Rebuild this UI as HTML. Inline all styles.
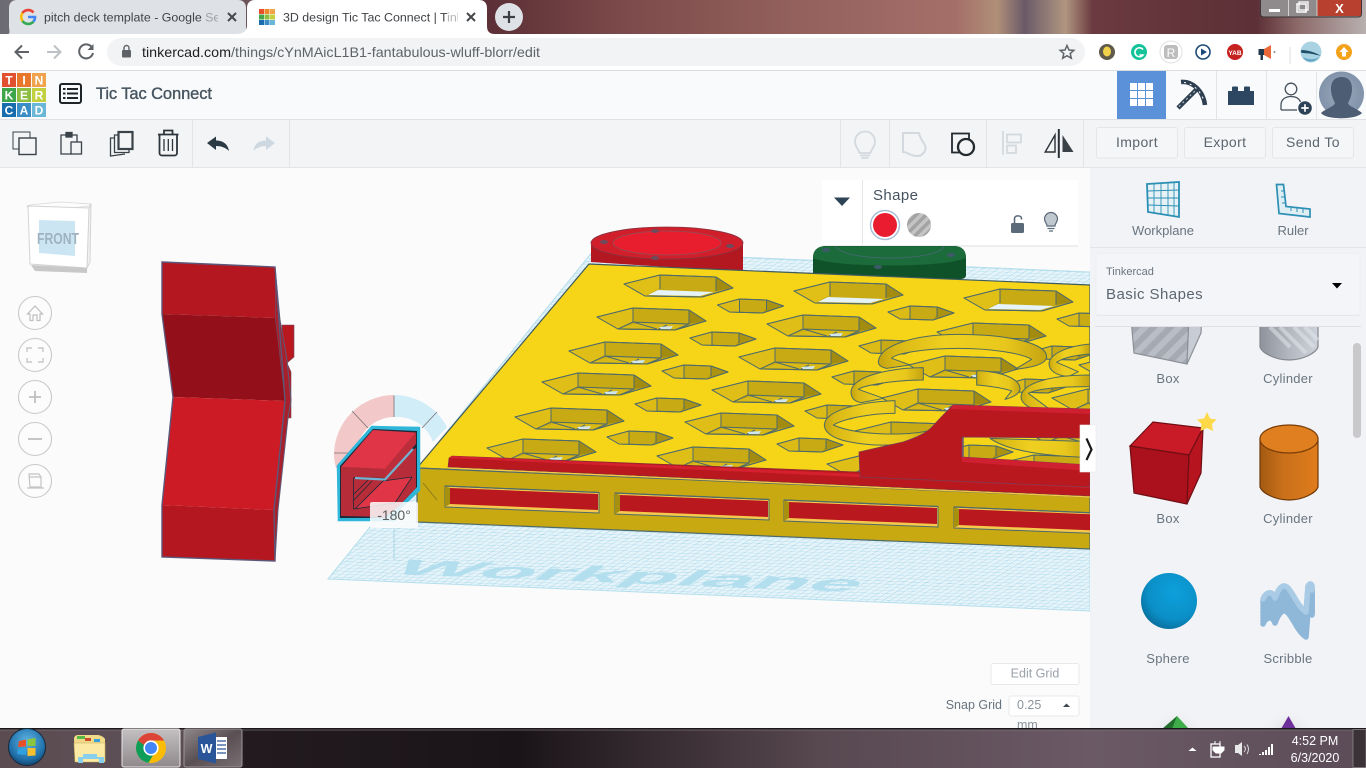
<!DOCTYPE html>
<html><head><meta charset="utf-8"><title>3D design Tic Tac Connect | Tinkercad</title>
<style>
html,body{margin:0;padding:0;width:1366px;height:768px;overflow:hidden;background:#fbfbfb}
svg{display:block;position:absolute;left:0;top:0}
text{font-family:"Liberation Sans",sans-serif}
</style></head><body>
<svg width="1366" height="768" viewBox="0 0 1366 768" xmlns="http://www.w3.org/2000/svg">
<defs>
<linearGradient id="wall" x1="0" x2="1" y1="0" y2="0">
<stop offset="0" stop-color="#6b6a72"/><stop offset=".03" stop-color="#7a7278"/><stop offset=".36" stop-color="#5c3036"/><stop offset=".46" stop-color="#7d4b4b"/><stop offset=".58" stop-color="#93605c"/><stop offset=".70" stop-color="#a56f69"/><stop offset=".73" stop-color="#b08f78"/><stop offset=".75" stop-color="#6a5a68"/><stop offset=".78" stop-color="#b09680"/><stop offset=".80" stop-color="#6a3a40"/><stop offset=".92" stop-color="#5c3036"/><stop offset=".95" stop-color="#8d6a6a"/><stop offset="1" stop-color="#b8b0b0"/>
</linearGradient>
<linearGradient id="task" x1="0" x2="1" y1="0" y2="0">
<stop offset="0" stop-color="#5b4c52"/><stop offset=".13" stop-color="#5d5056"/><stop offset=".18" stop-color="#221a1e"/><stop offset=".38" stop-color="#1a1418"/><stop offset=".6" stop-color="#584850"/><stop offset=".8" stop-color="#6b5a66"/><stop offset="1" stop-color="#5b4c58"/>
</linearGradient>
<linearGradient id="btn" x1="0" x2="0" y1="0" y2="1"><stop offset="0" stop-color="#c4c0c2"/><stop offset="1" stop-color="#8f898c"/></linearGradient>
<linearGradient id="btn2" x1="0" x2="1" y1="0" y2="1"><stop offset="0" stop-color="#8e888b"/><stop offset=".5" stop-color="#5a5054"/><stop offset="1" stop-color="#7a7074"/></linearGradient>
<linearGradient id="cyl" x1="0" x2="1" y1="0" y2="0"><stop offset="0" stop-color="#a35a12"/><stop offset=".4" stop-color="#c9701a"/><stop offset="1" stop-color="#e07c1c"/></linearGradient>
<linearGradient id="cylg" x1="0" x2="1" y1="0" y2="0"><stop offset="0" stop-color="#8e939b"/><stop offset=".5" stop-color="#b3b8c0"/><stop offset="1" stop-color="#cdd1d9"/></linearGradient>
<radialGradient id="sph" cx=".6" cy=".35" r=".8"><stop offset="0" stop-color="#0da0dc"/><stop offset=".6" stop-color="#0b8fc6"/><stop offset="1" stop-color="#075d88"/></radialGradient>
<radialGradient id="ava" cx=".5" cy=".5" r=".5"><stop offset="0" stop-color="#9aa8ba"/><stop offset="1" stop-color="#8193aa"/></radialGradient>
<radialGradient id="orb" cx=".5" cy=".35" r=".7"><stop offset="0" stop-color="#5fb6e6"/><stop offset=".7" stop-color="#1f6fa8"/><stop offset="1" stop-color="#123a60"/></radialGradient>
<radialGradient id="glow" cx=".5" cy=".5" r=".5"><stop offset="0" stop-color="#d8d8da"/><stop offset="1" stop-color="#f2f3f6" stop-opacity="0"/></radialGradient>
<linearGradient id="rg" x1="0" x2="1" y1="0" y2="0"><stop offset="0" stop-color="#c4a311"/><stop offset=".1" stop-color="#d9b816"/><stop offset=".4" stop-color="#efcf1f"/><stop offset=".75" stop-color="#e8c81c"/><stop offset="1" stop-color="#c4a311"/></linearGradient>
<pattern id="grid" width="60" height="60" patternUnits="userSpaceOnUse" patternTransform="matrix(1.2,.05,-.8,.5,0,0)">
<rect width="60" height="60" fill="#e6f4fa"/>
<path d="M6 0V60M12 0V60M18 0V60M24 0V60M30 0V60M36 0V60M42 0V60M48 0V60M54 0V60M0 6H60M0 12H60M0 18H60M0 24H60M0 30H60M0 36H60M0 42H60M0 48H60M0 54H60" stroke="#a6d8ea" stroke-width=".6" fill="none"/>
<path d="M0 0V60M0 0H60" stroke="#7cc2db" stroke-width=".9" fill="none"/>
</pattern>
<pattern id="stripe" width="12" height="12" patternUnits="userSpaceOnUse" patternTransform="rotate(45)">
<rect width="12" height="12" fill="#b9bdc5"/><rect width="6" height="12" fill="#a5a9b2"/>
</pattern>
<pattern id="stripe2" width="7" height="7" patternUnits="userSpaceOnUse" patternTransform="rotate(45)">
<rect width="7" height="7" fill="#c4c4c4"/><rect width="3.5" height="7" fill="#a3a3a3"/>
</pattern>
<clipPath id="canvasClip"><rect x="0" y="168" width="1090" height="560"/></clipPath>
<clipPath id="shelf"><rect x="1090" y="327" width="276" height="401"/></clipPath>
<clipPath id="tabText1"><rect x="40" y="0" width="178" height="34"/></clipPath>
<clipPath id="tabText2"><rect x="280" y="0" width="178" height="34"/></clipPath>
<clipPath id="mmClip"><rect x="1000" y="716" width="60" height="12"/></clipPath>

<g id="hexA" stroke="#4d6a6c" stroke-width="1" stroke-linejoin="round">
<polygon points="0,0 36,-9 92,-7 109,4 78,13 21,12" fill="#c8aa14"/>
<polygon points="0,0 36,-9 36,4 21,12" fill="#e0bf17" stroke="none"/>
<polygon points="92,-7 109,4 92,7" fill="#a38b10" stroke="none"/>
<polygon points="24,11 34,6 90,8 76,12" fill="#e6f3f8" stroke="none"/>
<path d="M36 -9V5M92 -7V7" fill="none"/>
<polygon points="0,0 36,-9 92,-7 109,4 78,13 21,12" fill="none"/>
</g>
<g id="hexB" stroke="#4d6a6c" stroke-width="1" stroke-linejoin="round">
<polygon points="0,0 36,-9 92,-7 109,4 78,13 21,12" fill="#c8aa14"/>
<polygon points="0,0 36,-9 36,4 21,12" fill="#dfbe17" stroke="none"/>
<polygon points="92,-7 109,4 92,7" fill="#a38b10" stroke="none"/>
<polygon points="30,9 42,6 88,8 78,12 24,11" fill="#d9b916" stroke="none"/>
<path d="M36 -9V5L21 12M36 5L92 7V-7M92 7L78 13M36 5L60 12M70 8L62 12" fill="none"/>
<polygon points="62,10 76,9 74,12 64,12" fill="#cfe6ef" stroke="none"/>
<polygon points="0,0 36,-9 92,-7 109,4 78,13 21,12" fill="none"/>
</g>
<g id="hexS" stroke="#4d6a6c" stroke-width="1" stroke-linejoin="round">
<polygon points="0,0 22,-6 49,-5 66,1 45,8 12,7" fill="#c8aa14"/>
<polygon points="0,0 22,-6 22,7 12,7" fill="#dcbb17" stroke="none"/>
<polygon points="49,-5 66,1 45,8 49,3" fill="#ab9211" stroke="none"/>
<path d="M22 -6V7M49 -5V5" fill="none"/>
<polygon points="0,0 22,-6 49,-5 66,1 45,8 12,7" fill="none"/>
</g>
<g id="slot">
<polygon points="445,486 599,492.5 599,513 445,507" fill="#f5c94b" stroke="#4d6a6c" stroke-width="1"/>
<polygon points="450,488 598,494 598,510 450,504" fill="#b9181f"/>
<polygon points="445,486 450,488 450,504 445,507" fill="#a8900f"/>
<path d="M445 486L599 492.5" stroke="#4d6a6c" stroke-width="1.2" fill="none"/>
</g>
<path id="scr" d="M1263 599C1266 592 1272 590 1275 598C1278 590 1282 583 1287 587C1293 592 1297 606 1306 612L1308 586C1310 582 1313 584 1312 590" fill="none" stroke-width="5.500" stroke-linejoin="round" stroke-linecap="round"/>
</defs>

<!-- wallpaper -->
<rect width="1366" height="36" fill="url(#wall)"/>
<!-- window controls -->
<g>
<rect x="1260.5" y="-3" width="101" height="20" rx="3" fill="#8f8a8c" stroke="#3e3436"/>
<rect x="1317" y="-2" width="44" height="18" rx="2" fill="#b8402f"/>
<path d="M1288.5 -2V16M1317 -2V16" stroke="#e6e0e0" stroke-width=".8"/>
<rect x="1269" y="9" width="11" height="3" fill="#fff"/>
<rect x="1297" y="4" width="9" height="8" fill="none" stroke="#fff" stroke-width="1.5"/>
<rect x="1299" y="2" width="9" height="8" fill="none" stroke="#fff" stroke-width="1.3"/>
<text x="1339.5" y="13" font-size="13" font-weight="bold" fill="#fff" text-anchor="middle">X</text>
</g>
<!-- tabs -->
<path d="M7 34C11 34 9 31 9 26V8C9 3 12 0 17 0H238C243 0 246 3 246 8V26C246 31 248 34 250 34Z" fill="#dee1e6"/>
<path d="M236 34C243 34 247 31 247 26V8C247 3 250 0 255 0H479C484 0 487 3 487 8V26C487 31 489 34 495 34Z" fill="#fff"/>
<circle cx="509" cy="17" r="14" fill="#dee1e6"/>
<path d="M509 11V23M503 17H515" stroke="#3c4043" stroke-width="2.2"/>
<!-- G favicon -->
<g fill="none" stroke-width="2.6">
<path d="M33.5 12.5A7 7 0 0 0 22.5 13" stroke="#ea4335"/>
<path d="M22.5 13A7 7 0 0 0 22.5 21" stroke="#fbbc05"/>
<path d="M22.5 21A7 7 0 0 0 33.5 21.5" stroke="#34a853"/>
<path d="M33.5 21.5A7 7 0 0 0 35 17H28" stroke="#4285f4"/>
</g>
<text x="44" y="21.5" font-size="12.400" fill="#3f4246" clip-path="url(#tabText1)">pitch deck template - Google Search</text>
<rect x="206" y="2" width="14" height="30" fill="#dee1e6" opacity=".6"/>
<path d="M228 13L236 21M236 13L228 21" stroke="#45484c" stroke-width="2"/>
<!-- active favicon -->
<g>
<rect x="259" y="9" width="5" height="5" fill="#e8502a"/><rect x="264.5" y="9" width="5" height="5" fill="#ea8a2d"/><rect x="270" y="9" width="5" height="5" fill="#f3a648"/>
<rect x="259" y="14.5" width="5" height="5" fill="#43a64a"/><rect x="264.5" y="14.5" width="5" height="5" fill="#8cbf3f"/><rect x="270" y="14.5" width="5" height="5" fill="#c4d03f"/>
<rect x="259" y="20" width="5" height="5" fill="#1a6eb0"/><rect x="264.5" y="20" width="5" height="5" fill="#3a8dc5"/><rect x="270" y="20" width="5" height="5" fill="#6ab8d8"/>
</g>
<text x="283" y="21.5" font-size="12.400" fill="#3f4246" clip-path="url(#tabText2)">3D design Tic Tac Connect | Tinkercad</text>
<rect x="448" y="2" width="12" height="30" fill="#fff" opacity=".6"/>
<path d="M467 13L475 21M475 13L467 21" stroke="#45484c" stroke-width="2"/>

<!-- browser toolbar -->
<rect y="34" width="1366" height="36" fill="#fff"/>
<rect y="70" width="1366" height="1" fill="#dadce0"/>
<path d="M29 52H16M22 45.5L15.5 52L22 58.5" fill="none" stroke="#5f6368" stroke-width="2"/>
<path d="M47 52H60M54 45.5L60.5 52L54 58.5" fill="none" stroke="#bdc1c6" stroke-width="2"/>
<path d="M92 47.5A7 7 0 1 0 93 53" fill="none" stroke="#5f6368" stroke-width="2"/><path d="M93.5 44V50H87.5Z" fill="#5f6368"/>
<rect x="107" y="38" width="978" height="28" rx="14" fill="#f1f3f4"/>
<rect x="122" y="50" width="9" height="7.5" rx="1" fill="#5f6368"/><path d="M124 50V48A2.5 2.5 0 0 1 129 48V50" fill="none" stroke="#5f6368" stroke-width="1.4"/>
<text x="142" y="57" font-size="14" fill="#202124" textLength="398" lengthAdjust="spacingAndGlyphs"><tspan>tinkercad.com</tspan><tspan fill="#5f6368">/things/cYnMAicL1B1-fantabulous-wluff-blorr/edit</tspan></text>
<path d="M1067 45.5L1069 50L1073.8 50.4L1070.2 53.5L1071.3 58.2L1067 55.7L1062.7 58.2L1063.8 53.5L1060.2 50.4L1065 50Z" fill="none" stroke="#5f6368" stroke-width="1.5"/>
<!-- extensions -->
<circle cx="1107" cy="52" r="8" fill="#5f5a4a"/><ellipse cx="1107" cy="51.5" rx="4" ry="5" fill="#f2d24a"/>
<circle cx="1139" cy="52" r="8" fill="#15c39a"/><path d="M1143 49.5A4.5 4.5 0 1 0 1143 55H1139.5" fill="none" stroke="#fff" stroke-width="1.6"/>
<circle cx="1171" cy="52" r="11" fill="#fff" stroke="#dfe1e4"/><rect x="1164" y="45" width="14" height="14" rx="3" fill="#bdbdbd"/><text x="1171" y="57" font-size="12" fill="#fff" text-anchor="middle" font-family="Liberation Serif">R</text>
<circle cx="1203" cy="52" r="7" fill="#fff" stroke="#1c4a78" stroke-width="1.6"/><path d="M1201 48.5L1207 52L1201 55.5Z" fill="#1c4a78"/>
<circle cx="1235" cy="52" r="8" fill="#c5211f"/><text x="1235" y="55" font-size="6.5" font-weight="bold" fill="#fff" text-anchor="middle">YAB</text>
<path d="M1260 49H1264L1271 45V59L1264 55H1260Z" fill="#e8683a"/><path d="M1258.5 49H1264V55H1263V60H1260.5V55H1258.5Z" fill="#22384e"/><circle cx="1274.5" cy="52" r="1" fill="#888"/>
<rect x="1289.5" y="47" width="1" height="17" fill="#dadce0"/>
<circle cx="1311" cy="52" r="10.5" fill="#a9d2e2"/><path d="M1301 50C1307 50 1315 52 1321 56C1314 54 1307 53 1301.5 53Z" fill="#1f4f68"/><path d="M1303 57C1308 60 1315 60 1319 57C1315 63 1306 63 1303 57Z" fill="#5fa5c2"/>
<circle cx="1344" cy="52" r="8" fill="#f3a21c"/><path d="M1344 47L1339.5 52H1342V56.5H1346V52H1348.5Z" fill="#fff"/>

<!-- tinkercad header -->
<rect y="71" width="1366" height="48" fill="#f9fafb"/>
<rect y="119" width="1366" height="1.5" fill="#dfe1e4"/>
<g font-size="12" font-weight="bold" fill="#fff" text-anchor="middle">
<rect x="2" y="73" width="14" height="14" fill="#e2512f"/><text x="9" y="84.5">T</text>
<rect x="17" y="73" width="14" height="14" fill="#e9772b"/><text x="24" y="84.5">I</text>
<rect x="32" y="73" width="14" height="14" fill="#f0a24c"/><text x="39" y="84.5">N</text>
<rect x="2" y="88" width="14" height="14" fill="#3fa54b"/><text x="9" y="99.5">K</text>
<rect x="17" y="88" width="14" height="14" fill="#8cbf3f"/><text x="24" y="99.5">E</text>
<rect x="32" y="88" width="14" height="14" fill="#c2cf3e"/><text x="39" y="99.5">R</text>
<rect x="2" y="103" width="14" height="14" fill="#176cae"/><text x="9" y="114.5">C</text>
<rect x="17" y="103" width="14" height="14" fill="#3a8dc5"/><text x="24" y="114.5">A</text>
<rect x="32" y="103" width="14" height="14" fill="#6ab7d7"/><text x="39" y="114.5">D</text>
</g>
<rect x="60" y="84" width="21" height="19" rx="2" fill="none" stroke="#1f2428" stroke-width="2"/>
<path d="M63 89H65.5M67 89H78M63 93.5H65.5M67 93.5H78M63 98H65.5M67 98H78" stroke="#1f2428" stroke-width="2"/>
<text x="96" y="99" font-size="16.500" fill="#46545f" stroke="#46545f" stroke-width=".35" textLength="116" lengthAdjust="spacing">Tic Tac Connect</text>
<!-- header right -->
<rect x="1117" y="71" width="49" height="48" fill="#5a91d8"/>
<g fill="#fff"><rect x="1130" y="83" width="7" height="7"/><rect x="1138" y="83" width="7" height="7"/><rect x="1146" y="83" width="7" height="7"/><rect x="1130" y="91" width="7" height="7"/><rect x="1138" y="91" width="7" height="7"/><rect x="1146" y="91" width="7" height="7"/><rect x="1130" y="99" width="7" height="7"/><rect x="1138" y="99" width="7" height="7"/><rect x="1146" y="99" width="7" height="7"/></g>
<path d="M1216.5 71V119M1266.5 71V119M1316.5 72V119" stroke="#e2e4e7"/>
<path d="M1178 108L1197 89" stroke="#2d3f50" stroke-width="4.500"/><path d="M1179 106.500L1195 91" stroke="#c9d0d6" stroke-width="1" stroke-dasharray="2 3"/>
<path d="M1181 82C1192 81 1203 90 1205 105" fill="none" stroke="#2d3f50" stroke-width="4.500"/><path d="M1184 82.500C1192 83 1201 91 1204 101" fill="none" stroke="#fff" stroke-width="1" stroke-dasharray="2 4"/>
<path d="M1228 91H1232V87.500A1 1 0 0 1 1233 86.500H1237A1 1 0 0 1 1238 87.500V91H1244V87.500A1 1 0 0 1 1245 86.500H1249A1 1 0 0 1 1250 87.500V91H1254V105H1228Z" fill="#2d4661"/>
<circle cx="1291" cy="89" r="5.800" fill="none" stroke="#46525d" stroke-width="1.300"/>
<path d="M1281 110V105C1281 99 1286 96.500 1291 96.500C1295 96.500 1299 98 1300.500 102" fill="none" stroke="#46525d" stroke-width="1.300"/><path d="M1281 110H1297" stroke="#46525d" stroke-width="1.300"/>
<circle cx="1305" cy="108" r="6.800" fill="#2d4256"/><path d="M1305 104.300V111.700M1301.300 108H1308.700" stroke="#fff" stroke-width="1.700"/>
<circle cx="1341.500" cy="94" r="22.500" fill="url(#ava)"/>
<path d="M1331 89C1331 80 1336 77 1342 77C1348 77 1352 81 1352 89C1352 96 1349 101 1348 103C1349 107 1358 109 1362 113C1356 120 1326 120 1321 113C1325 109 1334 107 1335 103C1333 99 1331 95 1331 89Z" fill="#4d5d73"/>

<!-- toolbar -->
<rect y="120" width="1366" height="47" fill="#f3f4f6"/>
<rect y="167" width="1366" height="1" fill="#e3e4e7"/>
<path d="M192.500 120V167M289.500 120V167M840.500 120V167M889.500 120V167M986.500 120V167M1083.500 120V167" stroke="#e2e4e7"/>
<g fill="none" stroke="#3a4249">
<rect x="13" y="132" width="17" height="17" stroke-width="1"/><rect x="19" y="138" width="17" height="16.500" fill="#f3f4f6" stroke-width="1.400"/>
<path d="M66 135H61V154H72M72 135H77V142" stroke-width="1.300"/><rect x="66" y="132.500" width="6" height="4.500" stroke-width="1.300" fill="#3a4249"/><rect x="71" y="142" width="10.500" height="12" stroke-width="1.300"/>
<rect x="118.500" y="132" width="14" height="17" stroke-width="2.200"/><path d="M118 135H114.500V152.500H129V149M114.500 138H110.500V156L125 154" stroke-width="1.300"/>
</g>
<g fill="none" stroke="#2d363d" stroke-width="1.800">
<path d="M158 134.500H178.500M164 134V130.500H172.500V134"/><path d="M159.500 135V153A2.500 2.500 0 0 0 162 155.500H174.500A2.500 2.500 0 0 0 177 153V135"/><path d="M164 139V151M168.300 139V151M172.500 139V151" stroke-width="1.300"/>
</g>
<path d="M207 143L216 136.500V140.500C224 140.500 228 145 229 151C225.500 147.500 221 146 216 146V150Z" fill="#2c3a44"/>
<path d="M275 143L266 136.500V140.500C258 140.500 254 145 253.500 151C257 147.500 261 146 266 146V150Z" fill="#cdd8e0"/>
<g fill="none" stroke="#d3d9de" stroke-width="1.800">
<path d="M859.500 153C859 149 855 147.500 855 141.500A10 10 0 0 1 875 141.500C875 147.500 871 149 870.500 153Z"/><path d="M860 155.500H870M861.500 158H868.500"/>
<path d="M903 133H919C920 139 924 142 925.500 147C926 152 922 156 917 156C910 156 908 152 903 152Z" stroke-width="2"/>
</g>
<rect x="952" y="133.500" width="17" height="19" fill="none" stroke="#242b30" stroke-width="1.800"/>
<circle cx="966" cy="147" r="8" fill="#f3f4f6" stroke="#242b30" stroke-width="2.300"/>
<path d="M1003 131V155" stroke="#d3d9de" stroke-width="1.800"/>
<rect x="1007" y="134.500" width="14" height="8" fill="none" stroke="#d3d9de" stroke-width="1.800"/>
<rect x="1007" y="145.500" width="9" height="7.500" fill="none" stroke="#d3d9de" stroke-width="1.800"/>
<path d="M1058.800 129V158" stroke="#2a3036" stroke-width="2"/>
<path d="M1055 135V152H1045.200Z" fill="none" stroke="#2a3036" stroke-width="1.400"/>
<path d="M1062.500 135V152H1073.500Z" fill="#3a4147"/>
<g fill="#f5f6f7" stroke="#e4e6e9"><rect x="1096.500" y="127.500" width="81" height="30.500" rx="2"/><rect x="1184.500" y="127.500" width="81" height="30.500" rx="2"/><rect x="1272.500" y="127.500" width="81" height="30.500" rx="2"/></g>
<g font-size="14" fill="#5b6670" text-anchor="middle" letter-spacing=".4"><text x="1137" y="147">Import</text><text x="1225" y="147">Export</text><text x="1313" y="147">Send To</text></g>

<!-- canvas -->
<rect x="0" y="168" width="1090" height="560" fill="#fbfbfb"/>
<g clip-path="url(#canvasClip)">
<!-- workplane -->
<polygon points="328,579 593,251 1090,272 1090,611" fill="url(#grid)" stroke="#b5deec"/>
<text transform="translate(388,574) matrix(1,.038,-.6,.42,0,0)" font-size="50" font-weight="bold" fill="#b3deee" textLength="465" lengthAdjust="spacingAndGlyphs">Workplane</text>
<!-- discs -->
<path d="M591 243V262L743 272V243Z" fill="#b31820"/>
<ellipse cx="667" cy="246" rx="76" ry="19" fill="#b31820"/>
<ellipse cx="667" cy="243" rx="76" ry="16" fill="#d01f2b" stroke="#8a3340" stroke-width=".8"/>
<ellipse cx="667" cy="243" rx="54" ry="12" fill="#e81e2e" stroke="#a0454f"/>
<ellipse cx="655" cy="231" rx="4" ry="2" fill="#6e4a5c"/><ellipse cx="604" cy="242" rx="4" ry="2" fill="#6e4a5c"/><ellipse cx="730" cy="246" rx="4" ry="2" fill="#6e4a5c"/><ellipse cx="655" cy="258" rx="4" ry="2" fill="#6e4a5c"/>
<path d="M813 258Q813 247 825 246H955Q966 247 966 258V275Q966 279 960 279H813Z" fill="#0f5229"/>
<path d="M813 258Q813 247 825 246H955Q966 247 966 258C945 268 835 268 813 258Z" fill="#1c6b3a"/>
<path d="M836 246C840 262 940 262 944 246" fill="none" stroke="#3e6a6a"/>
<ellipse cx="826" cy="250" rx="4" ry="2" fill="#3e5a6a"/><ellipse cx="951" cy="255" rx="4" ry="2" fill="#3e5a6a"/><ellipse cx="878" cy="267" rx="4" ry="2" fill="#3e5a6a"/>
<!-- plate -->
<polygon points="589,264 1090,285 1090,497 417,468" fill="#f6d417" stroke="#3e5a60" stroke-width="1.200"/>
<!-- hexes -->
<use href="#hexA" x="624" y="284"/><use href="#hexB" x="597" y="317"/><use href="#hexB" x="569" y="351"/><use href="#hexB" x="542" y="382"/><use href="#hexB" x="515" y="417"/><use href="#hexB" x="487" y="448"/>
<use href="#hexA" x="794" y="291"/><use href="#hexB" x="767" y="324"/><use href="#hexB" x="739" y="357"/><use href="#hexB" x="712" y="390"/><use href="#hexB" x="685" y="422"/><use href="#hexB" x="657" y="456"/>
<use href="#hexA" x="964" y="298"/><use href="#hexB" x="937" y="332"/><use href="#hexB" x="909" y="365"/><use href="#hexB" x="882" y="398"/><use href="#hexB" x="855" y="431"/><use href="#hexB" x="827" y="464"/>
<use href="#hexB" x="1079" y="365"/><use href="#hexB" x="1052" y="398"/><use href="#hexB" x="1025" y="431"/><use href="#hexB" x="998" y="464"/>
<use href="#hexS" x="717.500" y="305"/><use href="#hexS" x="690" y="338"/><use href="#hexS" x="662" y="371"/><use href="#hexS" x="635" y="404"/><use href="#hexS" x="607" y="437"/>
<use href="#hexS" x="888" y="312"/><use href="#hexS" x="859" y="346"/><use href="#hexS" x="832" y="377"/><use href="#hexS" x="805" y="411"/><use href="#hexS" x="777" y="444"/>
<use href="#hexS" x="1057" y="319"/><use href="#hexS" x="1030" y="352"/><use href="#hexS" x="1003" y="385"/><use href="#hexS" x="975" y="418"/><use href="#hexS" x="947" y="451"/>
<!-- rings -->
<g transform="translate(815,330) scale(.33333)" fill="url(#rg)" stroke="#4f6a60" stroke-width="3" stroke-linejoin="round">
<path d="M525 325L825 335V383C700 378 580 365 525 325Z"/>
<path d="M825 42C760 48 705 70 702 100C702 120 720 135 760 140L790 125L725 97C750 80 790 75 825 72Z"/>
<path d="M825 135C720 135 622 155 618 200C618 215 630 225 650 235H700L640 190C670 175 750 170 825 170Z"/>
<path d="M190 95C195 45 300 13 430 13C580 13 695 40 695 80C695 100 660 112 600 118L650 88C620 70 530 55 430 55C330 55 240 70 230 85L285 105L215 115C198 112 190 105 190 95Z"/>
<path d="M485 122C560 125 612 145 615 175C615 190 600 200 570 208L590 183C560 172 520 168 485 165Z"/>
<path d="M325 113C240 113 112 135 108 185C108 205 120 215 138 218L205 205L130 178C150 165 240 150 325 150Z"/>
<path d="M240 212C140 215 30 240 28 285C28 305 50 325 100 335C170 350 260 350 340 325L350 300C280 318 130 318 55 285C90 265 170 250 240 250Z"/>
</g>
<!-- front face -->
<polygon points="417,468 1090,497 1090,549 417,522" fill="#c9a911" stroke="#4d6a6c" stroke-width="1.200"/>
<use href="#slot"/><use href="#slot" x="170" y="7"/><use href="#slot" x="339" y="14"/><use href="#slot" x="509" y="21"/>
<path d="M423 483L437 500" stroke="#7d7020" stroke-width=".7"/>
<!-- rail -->
<polygon points="448,467 449,458 452,456 860,472 1090,485 1090,496" fill="#b9181f" stroke="#7a3040" stroke-width=".6"/>
<polygon points="449,458 452,456 1090,484 1090,488" fill="#d4202f"/>
<path d="M448 468L1090 497" stroke="#f5c84a" stroke-width="1.200"/>
<!-- big red shape -->
<path d="M859 452L903 442C915 438 925 434 932 427C940 418 947 411 953 405L1090 409V438L962 437V457L1090 465V487L860 477Z" fill="#b9181f" stroke="#7c3a50" stroke-width=".8"/>
<polygon points="953,405 1090,409 1090,414 951,409" fill="#cf2031"/>
<polygon points="962,457 1090,465 1090,471 962,462" fill="#cf2031"/>
<path d="M963 437.500V457" stroke="#6c5a78" stroke-width="1.500"/>
<!-- rotator -->
<path d="M394 395A60 60 0 0 0 334 455C334 460 335 464 336 468L358 466A38 38 0 0 1 394 417Z" fill="#f2c9c8"/>
<path d="M394 395A60 60 0 0 1 447 427L433 442A38 38 0 0 0 394 417Z" fill="#d1edf8"/>
<path d="M394 395.500V417M352 411L368 428M334 453H358M437 412L422 428" stroke="#7c7074" stroke-width=".8"/>
<!-- small box -->
<polygon points="338,466 372,427 419,428 419,490 400,508 395,520 339,520" fill="#2fb6d8" stroke="#2fb6d8" stroke-width="2.500"/>
<polygon points="340,466 373,429 417,431 417,487 400,505 385,518 340,518" fill="#1b2a3a"/>
<polygon points="341,467 385,469 385,478 354,477 354,509 395,503 398,507 385,517 341,516" fill="#b62c38"/>
<polygon points="341,467 373,430 416,432.500 385,469" fill="#e03547"/>
<polygon points="385,469 416,432.500 416,444 385,479" fill="#bd2e3a"/>
<polygon points="354,478 385,480 412,450 416,448 416,488 398,507 395,502 354,509" fill="#b62c38"/>
<polygon points="355,509 383,481 412,477 395,502" fill="#e03547"/>
<path d="M353.500 477.500V509L395 503L412 477M355 509L383 481M354 494L368 480M383 481L412 477M354 500L372 481" stroke="#1e2a38" stroke-width=".8" fill="none"/>
<path d="M355 478L385 479.500L413 449" stroke="#6fb4d3" stroke-width="2.200" fill="none"/>
<rect x="370" y="502" width="48" height="26" rx="2" fill="#fbfbfb" fill-opacity=".86"/>
<path d="M394 528V560" stroke="#9fcfe0" stroke-width=".8"/>
<text x="394" y="520" font-size="14" fill="#5a5a5a" text-anchor="middle">-180°</text>
<!-- big red object -->
<path d="M282 325H294V357L287 363L291 372V418H285Z" fill="#b9181f" stroke="#6e4a60" stroke-width=".6"/>
<polygon points="275,267 280,320 287,360 291,400 288,418 278,510 275,561 274,510 285,401 275,318" fill="#a8202c" stroke="#5d5a78" stroke-width="1"/>
<polygon points="162,262 275,267 275,318 162,314" fill="#b4171f"/>
<polygon points="162,314 275,318 285,401 173,397" fill="#93101a"/>
<polygon points="173,397 285,401 274,510 162,505" fill="#cd1b26"/>
<polygon points="162,505 274,510 275,561 162,557" fill="#b4171f"/>
<path d="M162 262L275 267L285 401L274 510L275 561L162 557V505L173 397L162 314Z" fill="none" stroke="#5c5678" stroke-width="1.400"/>
<!-- view cube -->
<polygon points="30,213 33,263 87,268 89,216" fill="#fff" stroke="#d4d4d4"/>
<polygon points="30,205 27,206 30,213 89,206 91,204 60,202" fill="#fcfcfc" stroke="#d9d9d9" stroke-width=".8"/>
<polygon points="89,208 91,204 90,262 87,268" fill="#f2f2f2" stroke="#d4d4d4"/>
<polygon points="28,206 89,208 87,268 30,264" fill="#fff" stroke="#d4d4d4"/>
<polygon points="39,220 75,221 75,256 39,253" fill="#cbe6f2"/>
<polygon points="31,265 87,268 87,273 35,271" fill="#c8c8c8"/>
<text x="58" y="244" font-size="15.500" font-weight="bold" fill="#9fb2c0" text-anchor="middle" textLength="42" lengthAdjust="spacingAndGlyphs">FRONT</text>
<!-- nav -->
<g fill="#fcfcfc" stroke="#c9c9c9" stroke-width="1.100"><circle cx="35" cy="313" r="16.500"/><circle cx="35" cy="355" r="16.500"/><circle cx="35" cy="397" r="16.500"/><circle cx="35" cy="439" r="16.500"/><circle cx="35" cy="481" r="16.500"/></g>
<path d="M27.500 314L35 306L42.500 314H40V320.500H37V315H33V320.500H30V314Z" fill="none" stroke="#bfbfbf" stroke-width="1.200"/>
<path d="M27 352V348H32M38 348H43V352M27 358V362H32M38 362H43V358" fill="none" stroke="#c8c8c8" stroke-width="1.400"/>
<path d="M35 391V403M29 397H41" stroke="#bfbfbf" stroke-width="1.800"/>
<path d="M28 439H42" stroke="#bfbfbf" stroke-width="1.800"/>
<path d="M29 474H39L41 477V487H30ZM29 477H41M27 488H44" fill="none" stroke="#c4c4c4" stroke-width="1.200"/>
<!-- shape panel -->
<rect x="822" y="180" width="256" height="65" fill="#000" opacity=".05" transform="translate(0,2)"/>
<rect x="822" y="180" width="256" height="65" fill="#fff"/>
<path d="M862.500 180V245" stroke="#e6e7ea"/>
<path d="M834 197.500H850L842 206Z" fill="#2e4356"/>
<text x="873" y="200" font-size="15" fill="#46535f" letter-spacing=".4">Shape</text>
<circle cx="885" cy="225" r="14.500" fill="#fff" stroke="#a9bfd6" stroke-width="1.500"/>
<circle cx="885" cy="225" r="12" fill="#ea1c2f"/>
<circle cx="919" cy="225" r="12" fill="url(#stripe2)"/>
<rect x="1011" y="223" width="13" height="10" rx="1.500" fill="#5b6a79"/><path d="M1014.500 223V218.500C1014.500 215 1021.500 215 1021.500 218.500V219.500" fill="none" stroke="#5b6a79" stroke-width="1.600"/>
<path d="M1047 226C1047 223.500 1044.500 222 1044.500 219A6.500 6.500 0 0 1 1057.500 219C1057.500 222 1055 223.500 1055 226Z" fill="#bfc7cf" stroke="#5b6a79" stroke-width="1.200"/><path d="M1047.500 228.500H1054.500M1049 231H1053" stroke="#5b6a79" stroke-width="1.300"/>
<!-- grid btns -->
<rect x="991" y="663.500" width="88" height="21" rx="2" fill="#fff" stroke="#e8e8ea"/>
<text x="1035" y="677.500" font-size="12.500" fill="#9aa1a9" text-anchor="middle">Edit Grid</text>
<text x="1002" y="709" font-size="12.500" fill="#68747f" text-anchor="end">Snap Grid</text>
<rect x="1009" y="696" width="70" height="20" rx="2" fill="#fff" stroke="#e8e8ea"/>
<text x="1017" y="709" font-size="12.500" fill="#8a939c">0.25</text>
<path d="M1063 707L1066.500 703.500L1070 707Z" fill="#3e4850"/>
<text x="1017" y="729" font-size="12.500" fill="#8a939c" clip-path="url(#mmClip)">mm</text>
</g>

<!-- right panel -->
<rect x="1090" y="168" width="276" height="560" fill="#f2f3f6"/>
<rect x="1090" y="247" width="276" height="1" fill="#e3e4e8"/>
<!-- chevron tab -->
<rect x="1080" y="425" width="16" height="47" fill="#fff" stroke="#ececec" stroke-width=".6"/>
<path d="M1086.500 438.500L1091.500 449.500L1086.500 460" fill="none" stroke="#1a1a1a" stroke-width="2.200"/>
<!-- workplane icon -->
<g fill="none" stroke="#2c8fb4">
<path d="M1147 184L1179 182V217L1148 212Z" fill="#e7f2f6" stroke-width="1.800"/>
<path d="M1147.500 191L1179 190M1148 198L1179 198M1148 205L1179 206M1154 183.500V213M1161 183V214M1168 182.700V215M1174 182.400V216" stroke-width=".9"/>
</g>
<!-- ruler icon -->
<path d="M1276.500 184.500H1283.500L1286 206.500L1310 209V217L1279 213.500Z" fill="#dfeef3" stroke="#2c8fb4" stroke-width="1.700"/>
<path d="M1281 191H1284M1281 197H1285M1282 203H1285M1291 208V211M1297 208.500V212M1303 209V213" stroke="#2c8fb4" stroke-width="1"/>
<text x="1163" y="235" font-size="13" fill="#68747f" text-anchor="middle">Workplane</text>
<text x="1293" y="235" font-size="13" fill="#68747f" text-anchor="middle">Ruler</text>
<!-- dropdown -->
<rect x="1096" y="254" width="264" height="62" rx="2" fill="#dcdde1" opacity=".6"/>
<rect x="1096" y="253" width="264" height="62" rx="2" fill="#f4f5f8" stroke="#e8e9ec" stroke-width=".6"/>
<text x="1106" y="275" font-size="11" fill="#68747f">Tinkercad</text>
<text x="1106" y="299" font-size="15" fill="#5b6670" letter-spacing=".45">Basic Shapes</text>
<path d="M1332 283H1342L1337 288.500Z" fill="#000"/>
<rect x="1095" y="326" width="266" height="1" fill="#dfe0e4"/>
<rect x="1353" y="343" width="8" height="95" rx="4" fill="#c9c9cb"/>
<!-- shapes -->
<g clip-path="url(#shelf)">
<polygon points="1130,306 1153,282 1203,288 1189,315" fill="#cdd1d8"/>
<polygon points="1130,306 1189,315 1187,364 1134,353" fill="url(#stripe)" stroke="#8c9097" stroke-width="1.200"/>
<polygon points="1189,315 1203,288 1201,333 1187,364" fill="#c8ccd4" stroke="#8c9097" stroke-width="1.200"/>
<path d="M1260 299V347C1262 353 1275 360 1289 360C1303 360 1316 353 1318 347V299Z" fill="url(#cylg)" stroke="#84888f" stroke-width="1.200"/>
<path d="M1270 327L1290 347M1280 327L1306 353M1294 327L1314 347M1305 327L1318 340" stroke="#e2e5ea" stroke-width="4" opacity=".55"/>
<polygon points="1130,446 1153,422 1203,428 1189,455" fill="#c91a28" stroke="#6f0e14" stroke-width="1.200"/>
<polygon points="1130,446 1189,455 1187,504 1134,493" fill="#aa111c" stroke="#6f0e14" stroke-width="1.200"/>
<polygon points="1189,455 1203,428 1201,473 1187,504" fill="#b6141f" stroke="#6f0e14" stroke-width="1.200"/>
<path d="M1207 412L1210 418.500L1216.500 419.500L1212 424L1213 431L1207 428L1200.500 431L1201.500 424L1197 419.500L1204 418.500Z" fill="#fdd94a"/>
<path d="M1260 439V487C1262 493 1275 500 1289 500C1303 500 1316 493 1318 487V439Z" fill="url(#cyl)" stroke="#6e3808" stroke-width="1.200"/>
<ellipse cx="1289" cy="439" rx="29" ry="14" fill="#df7f1f" stroke="#7a3d08" stroke-width="1.200"/>
<circle cx="1169" cy="601" r="28" fill="url(#sph)"/>
<g stroke="#8fb7d8"><use href="#scr" y="25"/><use href="#scr" y="22"/><use href="#scr" y="19"/><use href="#scr" y="16"/><use href="#scr" y="13"/><use href="#scr" y="10"/><use href="#scr" y="7"/><use href="#scr" y="4"/><use href="#scr" y="2"/></g>
<use href="#scr" stroke="#aacbe6"/>
<ellipse cx="1176" cy="734" rx="30" ry="26" fill="url(#glow)"/><ellipse cx="1288" cy="734" rx="30" ry="26" fill="url(#glow)"/>
<path d="M1177 716L1165 729H1189Z" fill="#3fae4a"/><path d="M1177 716L1162 729H1172Z" fill="#226f2d"/>
<path d="M1288.500 716L1281 729H1296Z" fill="#6d2f99"/>
</g>
<g font-size="13" fill="#68747f" text-anchor="middle" letter-spacing=".25">
<text x="1168" y="383">Box</text><text x="1288" y="383">Cylinder</text>
<text x="1168" y="523">Box</text><text x="1288" y="523">Cylinder</text>
<text x="1168" y="663">Sphere</text><text x="1288" y="663">Scribble</text>
</g>

<!-- taskbar -->
<rect y="728" width="1366" height="40" fill="url(#task)"/>
<rect y="728" width="1366" height="1.500" fill="#1c171a"/>
<rect y="729.500" width="1366" height="1" fill="#8a8085" opacity=".6"/>
<circle cx="27" cy="747" r="18.500" fill="url(#orb)" stroke="#17283a"/>
<path d="M19 741L26 739.500V746.500L18 747Z" fill="#e8502a"/><path d="M27.500 739.300L35.500 738V746H27.500Z" fill="#8cc63f"/><path d="M18 748.500L26 748V755L17 754Z" fill="#2f9fe0"/><path d="M27.500 748H35.500V755.500L27.500 756Z" fill="#f7c02c"/>
<path d="M74 739C74 736 76 735 78 735H98C100 735 104 737 105 739V762H75Z" fill="#f0d989"/>
<rect x="77" y="736" width="8" height="3" fill="#57b947"/><rect x="85" y="738" width="6" height="3" fill="#cc4b2a"/><rect x="94" y="739" width="6" height="3" fill="#3b9fd8"/>
<path d="M74 743H105V762H75Z" fill="#fbe9a4" stroke="#c9ae5c" stroke-width=".6"/>
<path d="M78 763V757H83V754H97V757H104V763H99V759H83V763Z" fill="#88cfee"/>
<rect x="122" y="729" width="58" height="38" rx="2" fill="url(#btn)" stroke="#e8e6e7"/>
<rect x="184" y="729" width="58" height="38" rx="2" fill="url(#btn2)" stroke="#9c9498"/>
<circle cx="151" cy="748" r="15" fill="#fbbc05"/>
<path d="M138 740.500A15 15 0 0 1 164 740.500H151A7.500 7.500 0 0 0 144 745Z" fill="#db4437"/>
<path d="M138 740.500A15 15 0 0 0 148.500 762.800L155 752A7.500 7.500 0 0 1 144 745Z" fill="#0f9d58"/>
<circle cx="151" cy="748" r="7.600" fill="#fff"/><circle cx="151" cy="748" r="6" fill="#4285f4"/>
<path d="M198 737L216 732.500V763.500L198 759Z" fill="#2a5599"/>
<rect x="216" y="737" width="11" height="22" fill="#fff"/>
<path d="M217 741H226M217 745H226M217 749H226M217 753H226" stroke="#2a5599" stroke-width="1.200"/>
<text x="206.500" y="753" font-size="12.500" font-weight="bold" fill="#fff" text-anchor="middle">W</text>
<!-- tray -->
<path d="M1188.500 751L1192.500 747.500L1196.500 751Z" fill="#fff"/>
<rect x="1211" y="744" width="9" height="13" fill="none" stroke="#fff" stroke-width="1.300"/>
<path d="M1215 741V744M1220 741V744M1213 747H1224V750L1221 753H1216L1213 750Z" fill="#fff" stroke="#fff" stroke-width="1"/>
<path d="M1235 745H1238L1242 742V756L1238 753H1235Z" fill="#e8e8e8"/><path d="M1244 746C1246 748 1246 750 1244 752M1247 744.500C1249 748 1249 750 1247 754" fill="none" stroke="#d8d8d8" stroke-width="1"/>
<path d="M1259 754H1261V755H1259ZM1262 752H1264V755H1262ZM1265 750H1267V755H1265ZM1268 747H1270V755H1268ZM1271 744H1273V755H1271Z" fill="#fff"/>
<g font-size="12.500" fill="#fff" text-anchor="middle"><text x="1315" y="745">4:52 PM</text><text x="1315" y="762">6/3/2020</text></g>
<rect x="1353" y="729.500" width="13" height="38" fill="#3a3236" stroke="#8d8589" stroke-width=".8"/>
</svg>
</body></html>
